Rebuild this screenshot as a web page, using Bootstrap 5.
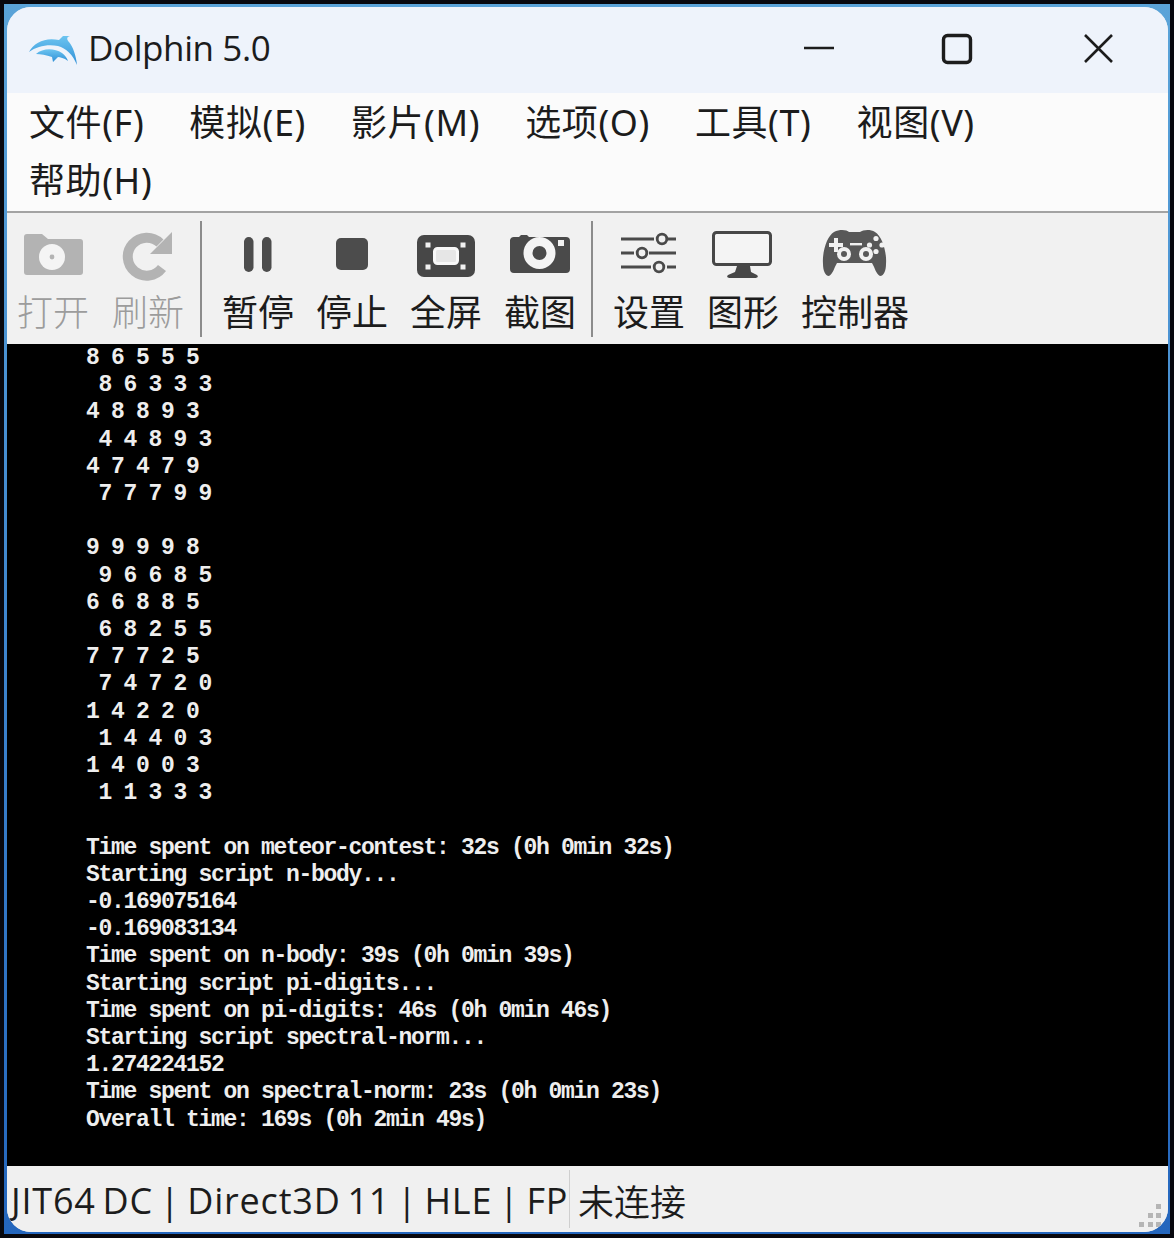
<!DOCTYPE html>
<html lang="zh">
<head>
<meta charset="utf-8">
<title>Dolphin 5.0</title>
<link href="https://cdn.jsdelivr.net/npm/bootstrap@5.3.0/dist/css/bootstrap.min.css" rel="stylesheet">
<style>
html,body{margin:0;height:1238px;overflow:hidden;background:#08080e}
body{font-family:"Noto Sans","Noto Sans CJK SC",sans-serif;color:#1c1c1c}
.shot{height:1238px;padding:4px}
.frame{height:1230px;padding:3px 2px 2px 3px;background:linear-gradient(180deg,#5aa3d8 0,#3f86cf 50%,#2466bd 100%)}
.win{height:100%;border-radius:24px;overflow:hidden;background:#f0f0f0}
.titlebar{height:86px;background:#eef3fb;padding-left:21px;flex:none}
.titletext{font-size:35px;margin-left:10px;line-height:1;font-family:"Open Sans","Noto Sans",sans-serif;letter-spacing:-.4px;position:relative;top:-3px}
.wctl{position:absolute;left:0;top:0}
.menubar{height:120px;background:#fbfbfb;border-bottom:2px solid #a3a3a3;padding:0 0 0 22px;column-gap:45px;flex:none}
.menuitem{font-size:36px;line-height:60px;height:58px;font-family:"Noto Sans","Noto Sans CJK SC",sans-serif;font-weight:400;letter-spacing:.6px;white-space:nowrap}
.toolbar{height:131px;background:#f1f1f1;padding-top:13px;flex:none}
.tool{width:94px;font-family:"Noto Sans CJK SC","Noto Sans",sans-serif;font-size:36px;line-height:48px;font-weight:400;white-space:nowrap}
.tool.wide{width:130px}
.tool.off{color:#9c9c9c;font-weight:300}
.tool svg{display:block;flex:none}
.tsep{width:2px;height:116px;background:#8c8c8c;margin:-5px 9px 0 5px;flex:none}
.tsep.tsep2{margin-left:4px}
.tool.first{margin-left:-1px}
.tool.second{margin-left:1px}
.term{flex:1 1 0;min-height:0;background:#000;color:#eee;margin:0;overflow:hidden;padding:1px 0 0 79px;font-family:"Liberation Mono",monospace;font-weight:700;font-size:23px;letter-spacing:-1.3px;line-height:27.2px;white-space:pre}
.statusbar{height:66px;background:#f0f0f0;position:relative;flex:none}
.stext{font-size:36px;line-height:70px;padding-left:4px;width:562px;white-space:nowrap;overflow:hidden;font-family:"Open Sans","Noto Sans",sans-serif;letter-spacing:.8px;word-spacing:-3.3px}
.sconn{border-left:1px solid #cfcfcf;margin-top:4px;height:58px;line-height:60px;padding-left:8px;font-size:36px;font-family:"Noto Sans CJK SC",sans-serif;font-weight:350}
.grip{position:absolute;right:0;bottom:2px}
</style>
</head>
<body>
<div class="shot"><div class="frame"><div class="win d-flex flex-column position-relative">

  <div class="titlebar d-flex align-items-center position-relative">
    <svg width="50" height="32" viewBox="0 0 50 32" aria-hidden="true">
      <defs><linearGradient id="lg" x1="0" y1="0" x2="0" y2="1"><stop offset="0" stop-color="#6cc4f0"/><stop offset="1" stop-color="#2f8fd6"/></linearGradient></defs>
      <path d="M1 18C6 8 18 3 31 6L35 2L42 2C38 3 39 6 41 8C45 13 48 21 49 31C45 21 38 14 30 12C20 10 9 12 1 18Z" fill="url(#lg)"/>
      <path d="M8 20C15 14 26 14 34 19C37 21 39 24 40 27C36 24 32 23 30 23L25 28L24 23C18 21 13 20 8 20Z" fill="url(#lg)"/>
    </svg>
    <span class="titletext">Dolphin 5.0</span>
    <svg class="wctl" width="1170" height="86" viewBox="0 0 1170 86" aria-hidden="true" fill="none" stroke="#1c1c1c">
      <path d="M797 41H827" stroke-width="2.4"/>
      <rect x="936.5" y="28.5" width="27" height="27" rx="4" stroke-width="3.4"/>
      <path d="M1078 28L1105 55M1105 28L1078 55" stroke-width="2.6"/>
    </svg>
  </div>

  <div class="menubar d-flex flex-wrap align-content-start">
    <span class="menuitem">文件(F)</span>
    <span class="menuitem">模拟(E)</span>
    <span class="menuitem">影片(M)</span>
    <span class="menuitem">选项(O)</span>
    <span class="menuitem">工具(T)</span>
    <span class="menuitem">视图(V)</span>
    <span class="menuitem w-100">帮助(H)</span>
  </div>

  <div class="toolbar d-flex align-items-start">
    <div class="tool off first d-flex flex-column align-items-center">
      <svg width="70" height="60" viewBox="0 0 70 60" aria-hidden="true">
        <path d="M6 11a3 3 0 0 1 3-3H24l6 5H62a3 3 0 0 1 3 3V46a3 3 0 0 1-3 3H9a3 3 0 0 1-3-3Z" fill="#b3b3b3"/>
        <circle cx="34" cy="31" r="13" fill="#f4f4f4"/><circle cx="34" cy="31" r="2.4" fill="#b3b3b3"/>
      </svg>打开
    </div>
    <div class="tool off second d-flex flex-column align-items-center">
      <svg width="70" height="60" viewBox="0 0 70 60" aria-hidden="true">
        <path d="M47 17A19 19 0 1 0 49 42" fill="none" stroke="#b3b3b3" stroke-width="10"/>
        <path d="M59 6V28H37Z" fill="#b3b3b3"/>
      </svg>刷新
    </div>
    <div class="tsep"></div>
    <div class="tool d-flex flex-column align-items-center">
      <svg width="70" height="60" viewBox="0 0 70 60" aria-hidden="true">
        <rect x="21" y="11" width="9.500" height="35" rx="4.700" fill="#4c4c4c"/><rect x="39" y="11" width="9.500" height="35" rx="4.700" fill="#4c4c4c"/>
      </svg>暂停
    </div>
    <div class="tool d-flex flex-column align-items-center">
      <svg width="70" height="60" viewBox="0 0 70 60" aria-hidden="true">
        <rect x="19" y="12" width="32" height="32" rx="5" fill="#4c4c4c"/>
      </svg>停止
    </div>
    <div class="tool d-flex flex-column align-items-center">
      <svg width="70" height="60" viewBox="0 0 70 60" aria-hidden="true">
        <rect x="6" y="9" width="58" height="42" rx="7" fill="#474747"/>
        <rect x="23.500" y="22.500" width="23" height="15" rx="3" fill="#e6e6e6" stroke="#f8f8f8" stroke-width="3"/>
        <rect x="14.500" y="16.500" width="5" height="5" fill="#f1f1f1"/><rect x="49.500" y="16.500" width="5" height="5" fill="#f1f1f1"/>
        <rect x="14.500" y="38.500" width="5" height="5" fill="#f1f1f1"/><rect x="49.500" y="38.500" width="5" height="5" fill="#f1f1f1"/>
      </svg>全屏
    </div>
    <div class="tool d-flex flex-column align-items-center">
      <svg width="70" height="60" viewBox="0 0 70 60" aria-hidden="true">
        <path d="M5 14a4 4 0 0 1 4-3H14l2-2h6l2 2H61a4 4 0 0 1 4 4V43a4 4 0 0 1-4 4H9a4 4 0 0 1-4-4Z" fill="#4a4a4a"/>
        <circle cx="34.500" cy="27" r="11.500" fill="#4a4a4a" stroke="#f4f4f4" stroke-width="9"/>
        <rect x="53" y="14" width="6" height="6" fill="#f1f1f1"/>
      </svg>截图
    </div>
    <div class="tsep tsep2"></div>
    <div class="tool d-flex flex-column align-items-center">
      <svg width="70" height="60" viewBox="0 0 70 60" aria-hidden="true" fill="none" stroke="#4a4a4a" stroke-width="2.800">
        <path d="M7 13H40M53 13H62M7 27H20M35 27H62M7 41H37M53 41H62"/>
        <circle cx="48" cy="13" r="4.800"/><circle cx="28" cy="27" r="4.800"/><circle cx="45" cy="41" r="4.800"/>
      </svg>设置
    </div>
    <div class="tool d-flex flex-column align-items-center">
      <svg width="70" height="60" viewBox="0 0 70 60" aria-hidden="true">
        <rect x="5.500" y="6.500" width="57" height="32" rx="3" fill="#f4f4f4" stroke="#474747" stroke-width="3"/>
        <path d="M29 40H42L43 46L49 49C51 51 49 52 47 52H22C20 52 18 51 20 49L27 46Z" fill="#474747"/>
      </svg>图形
    </div>
    <div class="tool wide d-flex flex-column align-items-center">
      <svg width="70" height="60" viewBox="0 0 70 60" aria-hidden="true">
        <path d="M14 6C20 3 27 4 29 6H40C43 4 50 3 55 6C62 10 67 26 66 38C66 44 64 50 60 50C56 48 55 42 52 37H17C14 42 13 48 9 50C5 50 3 44 3 38C2 26 7 10 14 6Z" fill="#585858"/>
        <path d="M14 12H18V17H23V21H18V26H14V21H9V17H14Z" fill="#f1f1f1"/>
        <g fill="#f1f1f1"><circle cx="56" cy="12.500" r="2.600"/><circle cx="56" cy="25.500" r="2.600"/><circle cx="49.500" cy="19" r="2.600"/><circle cx="62" cy="19" r="2.600"/><rect x="30" y="17" width="12" height="2.400"/></g>
        <circle cx="24" cy="28" r="7" fill="#f1f1f1"/><circle cx="24" cy="28" r="3" fill="#585858"/>
        <circle cx="46" cy="28" r="7" fill="#f1f1f1"/><circle cx="46" cy="28" r="3" fill="#585858"/>
      </svg>控制器
    </div>
  </div>

<pre class="term">8 6 5 5 5
 8 6 3 3 3
4 8 8 9 3
 4 4 8 9 3
4 7 4 7 9
 7 7 7 9 9

9 9 9 9 8
 9 6 6 8 5
6 6 8 8 5
 6 8 2 5 5
7 7 7 2 5
 7 4 7 2 0
1 4 2 2 0
 1 4 4 0 3
1 4 0 0 3
 1 1 3 3 3

Time spent on meteor-contest: 32s (0h 0min 32s)
Starting script n-body...
-0.169075164
-0.169083134
Time spent on n-body: 39s (0h 0min 39s)
Starting script pi-digits...
Time spent on pi-digits: 46s (0h 0min 46s)
Starting script spectral-norm...
1.274224152
Time spent on spectral-norm: 23s (0h 0min 23s)
Overall time: 169s (0h 2min 49s)</pre>

  <div class="statusbar d-flex">
    <div class="stext">JIT64 DC | Direct3D 11 | HLE | FP</div>
    <div class="sconn">未连接</div>
    <svg class="grip" width="32" height="26" viewBox="0 0 32 26" aria-hidden="true" fill="#b5b5b5">
      <rect x="20" y="0" width="5" height="5"/><rect x="12" y="9" width="5" height="5"/><rect x="20" y="9" width="5" height="5"/>
      <rect x="3" y="18" width="5" height="5"/><rect x="12" y="18" width="5" height="5"/><rect x="20" y="18" width="5" height="5"/>
    </svg>
  </div>

</div></div></div>
<script src="https://cdn.jsdelivr.net/npm/bootstrap@5.3.0/dist/js/bootstrap.bundle.min.js"></script>
</body>
</html>
